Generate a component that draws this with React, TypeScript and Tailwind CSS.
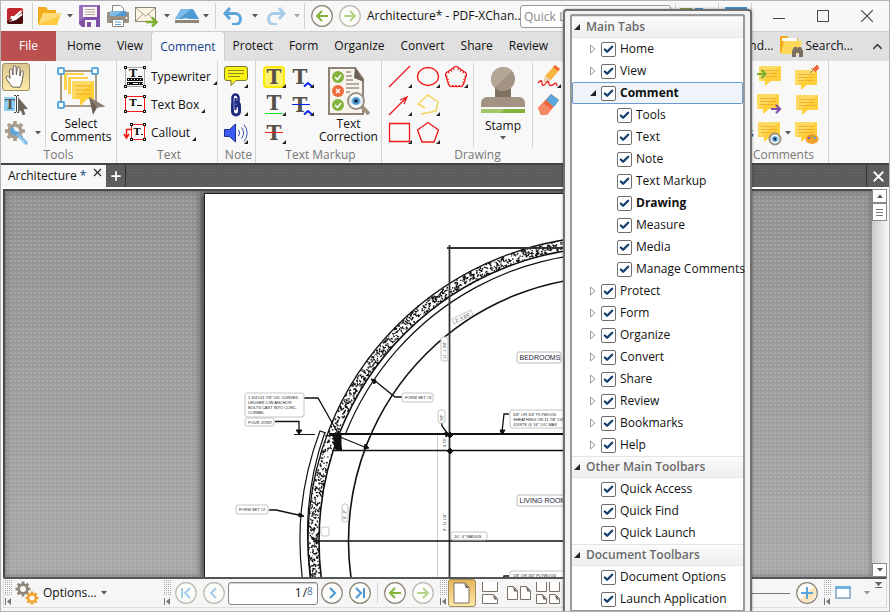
import { useState } from 'react';
import type { ReactNode } from 'react';
import { Check, ChevronUp, Plus, X } from 'lucide-react';

type Row = { label: string; level: number; kind?: 'closed' | 'open'; bold?: boolean; selected?: boolean };

const menuRows: Row[] = [
  { label: 'Main Tabs', level: 0 },
  { label: 'Home', level: 1, kind: 'closed' },
  { label: 'View', level: 1, kind: 'closed' },
  { label: 'Comment', level: 1, kind: 'open', bold: true, selected: true },
  { label: 'Tools', level: 2 },
  { label: 'Text', level: 2 },
  { label: 'Note', level: 2 },
  { label: 'Text Markup', level: 2 },
  { label: 'Drawing', level: 2, bold: true },
  { label: 'Measure', level: 2 },
  { label: 'Media', level: 2 },
  { label: 'Manage Comments', level: 2 },
  { label: 'Protect', level: 1, kind: 'closed' },
  { label: 'Form', level: 1, kind: 'closed' },
  { label: 'Organize', level: 1, kind: 'closed' },
  { label: 'Convert', level: 1, kind: 'closed' },
  { label: 'Share', level: 1, kind: 'closed' },
  { label: 'Review', level: 1, kind: 'closed' },
  { label: 'Bookmarks', level: 1, kind: 'closed' },
  { label: 'Help', level: 1, kind: 'closed' },
  { label: 'Other Main Toolbars', level: 0 },
  { label: 'Quick Access', level: 1 },
  { label: 'Quick Find', level: 1 },
  { label: 'Quick Launch', level: 1 },
  { label: 'Document Toolbars', level: 0 },
  { label: 'Document Options', level: 1 },
  { label: 'Launch Application', level: 1 },
];

const tabs = ['Home', 'View', 'Comment', 'Protect', 'Form', 'Organize', 'Convert', 'Share', 'Review'];

/* ---------- small parts ---------- */

function Caret({ className = '' }: { className?: string }) {
  return (
    <svg width="6" height="4" viewBox="0 0 6 4" className={`shrink-0 ${className}`}>
      <path d="M0 0h6L3 3.5z" fill="#555" />
    </svg>
  );
}

function Sep({ className = '' }: { className?: string }) {
  return <div className={`w-px shrink-0 self-stretch bg-[#d2d2d2] ${className}`} />;
}

function Pic({ w = 24, h = 24, children, className = '' }: { w?: number; h?: number; children: ReactNode; className?: string }) {
  return (
    <svg width={w} height={h} viewBox={`0 0 ${w} ${h}`} className={`shrink-0 ${className}`}>
      {children}
    </svg>
  );
}

// 28px ribbon cell, optional black corner marks a tool with options
function Tool({ label, corner = true, children }: { label: string; corner?: boolean; children: ReactNode }) {
  return (
    <button aria-label={label} className="block size-7 shrink-0">
      <svg width="28" height="28" viewBox="0 0 28 28" fill="none">
        {children}
        {corner && <path d="M26 21v4h-4z" fill="#222" />}
      </svg>
    </button>
  );
}

function Round({ label, stroke, children }: { label: string; stroke: string; children: ReactNode }) {
  return (
    <button aria-label={label} className="shrink-0">
      <svg width="22" height="22" viewBox="0 0 22 22" fill="none" strokeWidth="2">
        <circle cx="11" cy="11" r="10.3" fill="#fcfcfa" stroke={stroke} strokeWidth="1.2" />
        {children}
      </svg>
    </button>
  );
}

function Group({ label, className = '', children }: { label: string; className?: string; children: ReactNode }) {
  return (
    <section className={`flex shrink-0 flex-col border-r border-[#d2d2d2] pt-[2px] ${className}`}>
      <div className="flex h-[84px]">{children}</div>
      <h2 className="text-center leading-4 text-[#777]">{label}</h2>
    </section>
  );
}

function Grip() {
  return (
    <svg width="8" height="26" viewBox="0 0 8 26" className="shrink-0">
      {[0, 2, 4, 6, 8, 10, 12, 14].map((y) =>
        [0, 2, 4, 6].map((x) => <rect key={`${x}-${y}`} x={x} y={y} width="1" height="1" fill="#aaa" />)
      )}
      <path d="M0 18h1v7H0zM6 18v7l-4-3.500z" fill="#777" />
    </svg>
  );
}

/* ---------- icons ---------- */

function Bubble({ x = 0, y = 0 }: { x?: number; y?: number }) {
  return (
    <g transform={`translate(${x} ${y})`}>
      <path d="M0 0h22v15H12l-6 5v-5H0z" fill="#ffd03c" />
      <path d="M0 0h22L2 15H0z" fill="#ffda62" />
      <path d="M3 4.500h16M3 7.500h16M3 10.500h16" stroke="#f3b02c" strokeWidth="1" />
    </g>
  );
}

function Gear({ cx, cy, r, color }: { cx: number; cy: number; r: number; color: string }) {
  return (
    <g>
      {[0, 45, 90, 135].map((a) => (
        <rect key={a} x={cx - r * 0.18} y={cy - r} width={r * 0.36} height={r * 2} fill={color} transform={`rotate(${a} ${cx} ${cy})`} />
      ))}
      <circle cx={cx} cy={cy} r={r * 0.58} fill="#f7f7f7" stroke={color} strokeWidth={r * 0.36} />
    </g>
  );
}

function Letter({ x = 14, y = 21, size = 20, fill = '#57514b' }: { x?: number; y?: number; size?: number; fill?: string }) {
  return (
    <text x={x} y={y} fontSize={size} textAnchor="middle" fontFamily="DejaVu Serif, serif" fontWeight="700" fill={fill}>
      T
    </text>
  );
}

function Eye({ cx, cy, r }: { cx: number; cy: number; r: number }) {
  return (
    <g>
      <circle cx={cx} cy={cy} r={r} fill="#fff" stroke="#9a9083" strokeWidth="2" />
      <ellipse cx={cx} cy={cy} rx={r - 1.5} ry={r * 0.55} fill="#cfe4f4" />
      <circle cx={cx} cy={cy} r={r * 0.48} fill="#4a97d2" />
      <circle cx={cx} cy={cy} r={r * 0.22} fill="#10213a" />
    </g>
  );
}

const ArrowL = ({ c }: { c: string }) => <path d="M17 11H6M11 6l-5 5 5 5" stroke={c} />;
const ArrowR = ({ c }: { c: string }) => <path d="M5 11h11M11 6l5 5-5 5" stroke={c} />;

// scalloped pentagon, four bumps on every side
const corners = [[14, 4], [24, 11], [20.5, 22], [7.5, 22], [4, 11]];
const cloudPath =
  'M14 4' +
  corners
    .map(([x, y], i) => {
      const [nx, ny] = corners[(i + 1) % corners.length];
      return [1, 2, 3, 4]
        .map((k) => `A1.6 1.6 0 0 1 ${(x + ((nx - x) * k) / 4).toFixed(1)} ${(y + ((ny - y) * k) / 4).toFixed(1)}`)
        .join('');
    })
    .join('');

/* ---------- title bar ---------- */

function TitleBar() {
  return (
    <header className="flex h-[30px] shrink-0 items-center bg-[#f7f7f7]">
      <Pic w={16} h={16} className="ml-1.5">
        <rect width="16" height="16" rx="2" fill="#c3272b" />
        <path d="M16 4v10a2 2 0 0 1-2 2H2a2 2 0 0 1-2-2v-1z" fill="#4a0a0d" />
        <path d="M2 14l2-6 3 0 7-6 1 2-6 5 6-4 .5 2-6.500 5z" fill="#fff" />
        <path d="M2 14l3-2-1-2z" fill="#4a0a0d" />
      </Pic>
      <Sep className="my-0.5 ml-[9px]" />
      <button aria-label="Open" className="ml-1 flex items-center gap-1.5">
        <Pic>
          <path d="M1 3h8l2 3h8v14H1z" fill="#f2ac1b" />
          <path d="M6 9h18l-4 12H1z" fill="#ffcb3f" />
          <path d="M6 9h18l-1 3L2 20z" fill="#ffdb78" />
        </Pic>
        <Caret />
      </button>
      <button aria-label="Save" className="ml-1.5">
        <Pic w={22} h={22}>
          <path d="M1 0h20v22H3l-3-3V1z" fill="#7f50a4" />
          <path d="M1 0h20L0 17V1z" fill="#9a72ba" />
          <path d="M4 2h14v10H4zM6 15h11v7H6z" fill="#f7f4fa" />
          <path d="M6 4.500h10M6 7h10M6 9.500h10" stroke="#b9a98f" />
          <path d="M8 17h4v5H8z" fill="#7f50a4" />
        </Pic>
      </button>
      <button aria-label="Print" className="ml-1.5">
        <Pic w={22} h={22}>
          <path d="M5.500 8V.5h8l3 3V8" fill="#fff" stroke="#8e8477" />
          <rect y="7" width="22" height="11" rx="1" fill="#9a9083" />
          <path d="M3 6h16v5H3z" fill="#4f9ad2" />
          <path d="M3 6h13l-8 5H3z" fill="#7dbbe6" />
          <path d="M5.500 14.500h11v7h-11z" fill="#fff" stroke="#8e8477" />
          <path d="M8 17h6M8 19.500h6" stroke="#5aa5dc" />
          <circle cx="19.500" cy="13" r="1" fill="#fff" />
        </Pic>
      </button>
      <button aria-label="Send by e-mail" className="ml-1.5 flex items-center gap-1.5">
        <Pic w={23} h={22}>
          <rect x=".5" y="2.500" width="20" height="14" fill="#fdf5e3" stroke="#8e8477" />
          <path d="M1 3l9.500 8L20 3M1 16l7-7M20 16l-7-7" stroke="#a99c8b" fill="none" />
          <path d="M11 17h10M17 12.500l4.500 4.500-4.500 4.500" stroke="#7aae2d" strokeWidth="2.500" fill="none" />
        </Pic>
        <Caret />
      </button>
      <button aria-label="Scan" className="ml-[5px] flex items-center gap-1">
        <Pic w={24} h={20}>
          <path d="M6 3h12l6 10H0z" fill="#4f9ad2" />
          <path d="M6 3h10L4 13H0z" fill="#7dbbe6" />
          <path d="M0 14h24v3H0z" fill="#8e8477" />
          <path d="M8 13h5" stroke="#fff" />
        </Pic>
        <Caret />
      </button>
      <Sep className="my-0.5 ml-1.5" />
      <button aria-label="Undo" className="ml-[7px] flex items-center gap-2">
        <Pic w={21} h={18}>
          <path d="M7 1L2 6.500 7 12M2 6.500h10a5.500 5.500 0 0 1 0 11H9" stroke="#5aa5dc" strokeWidth="3" fill="none" />
        </Pic>
        <Caret />
      </button>
      <button aria-label="Redo" className="ml-[7px] flex items-center gap-2 opacity-50">
        <Pic w={21} h={18}>
          <path d="M14 1l5 5.500L14 12M19 6.500H9a5.500 5.500 0 0 0 0 11h3" stroke="#5aa5dc" strokeWidth="3" fill="none" />
        </Pic>
        <Caret />
      </button>
      <Sep className="my-0.5 ml-1" />
      <div className="ml-1.5 flex gap-1.5">
        <Round label="Previous view" stroke="#8e8477"><ArrowL c="#84b43c" /></Round>
        <Round label="Next view" stroke="#bdb7ad"><ArrowR c="#b5d38a" /></Round>
      </div>
      <h1 className="ml-1.5 w-[153px] shrink-0 whitespace-nowrap">Architecture* - PDF-XChan..</h1>
      <input
        aria-label="Quick Launch"
        placeholder="Quick Launch"
        className="h-[23px] w-[151px] shrink-0 rounded-[3px] border border-[#999] bg-white px-[3px] placeholder:text-[#8a8a8a]"
      />
      <Sep className="my-0.5 ml-1" />
      <Pic w={24} h={20} className="ml-1">
        <path d="M0 2h12v18H0z" fill="#84a43c" />
        <path d="M15 2h8v18h-8z" fill="#4a97d2" />
      </Pic>
      <Sep className="my-0.5 ml-3.5" />
      <Pic w={22} h={20} className="ml-1.5">
        <path d="M0 1h22v18H0z" fill="#4a97d2" />
        <path d="M1 5h20v13H1z" fill="#fff" />
      </Pic>
      <Sep className="my-0.5 ml-1" />
      <div className="ml-auto flex h-full">
        <button aria-label="Minimize" className="grid w-11 place-items-center"><Pic w={12} h={12}><path d="M0 8.500h12" stroke="#444" /></Pic></button>
        <button aria-label="Maximize" className="grid w-11 place-items-center"><Pic w={12} h={12}><path d="M.5.5h11v11H.5z" stroke="#444" fill="none" /></Pic></button>
        <button aria-label="Close" className="grid w-11 place-items-center"><Pic w={12} h={12}><path d="M0 0l12 12M12 0L0 12" stroke="#444" strokeWidth="1.200" /></Pic></button>
      </div>
    </header>
  );
}

function TabBar() {
  return (
    <nav className="flex h-[30px] shrink-0 bg-[#e0e0e0] shadow-[inset_0_1px_0_#cfcfcf]">
      <button className="w-[55px] shrink-0 bg-[#bb5050] text-white">File</button>
      <div className="ml-[3px] flex">
        {tabs.map((t) => (
          <button
            key={t}
            className={
              t === 'Comment'
                ? 'rounded-t-sm border border-b-0 border-[#cfcfcf] bg-[#f8f8f8] px-2 text-[#12448c]'
                : 'px-2'
            }
          >
            {t}
          </button>
        ))}
      </div>
      <div className="ml-auto flex items-center">
        <button>Find...</button>
        <button className="ml-1.5 flex items-center gap-[3px]">
          <Pic w={23} h={22}>
            <path d="M0 1h7l2 2h9v15H0z" fill="#f2ac1b" />
            <path d="M2 3h15v3H2z" fill="#fff" />
            <path d="M4 6h18l-3 13H1z" fill="#ffd95c" />
            <path d="M12 22v-6l2-4h3l1 1 1-1h2l2 4v6h-4v-4h-3v4z" fill="#7b7062" />
          </Pic>
          Search...
        </button>
        <button aria-label="Collapse ribbon" className="mr-1 ml-[17px]"><ChevronUp size={15} strokeWidth={2.5} color="#444" /></button>
      </div>
    </nav>
  );
}

/* ---------- ribbon ---------- */

function Ribbon() {
  return (
    <div className="flex h-[102px] shrink-0 bg-[#f8f8f8]">
      <Group label="Tools" className="w-[116px]">
        <div className="w-11 pl-px">
          <button aria-label="Hand" className="grid size-7 place-items-center rounded-[3px] border border-[#a08c5c] bg-linear-to-b from-[#dcc692] to-[#fdeaa8]">
            <svg width="22" height="24" viewBox="0 0 22 24">
              <path
                d="M7 22C5 18 2 16 1 12c1-1.500 3-1 4 1.500L4.500 5c.5-1.800 2.500-1.500 2.700 0L8 10l.2-8c.3-1.700 2.600-1.700 2.800 0l.4 8 1-7c.4-1.600 2.500-1.300 2.600.2L14.800 11l1.400-4.500c.6-1.400 2.400-.8 2.200.8-.6 4-1 11-3.400 15z"
                fill="#fff"
                stroke="#6b6257"
              />
            </svg>
          </button>
          <Tool label="Select text" corner={false}>
            <path d="M2 6h11v14H2z" fill="#8dd0f5" />
            <Letter x={8} y={18} size={13} />
            <path d="M12 4.500h2M15 4.500h2M14.500 5v16M12 21.500h2M15 21.500h2" stroke="#444" />
            <path d="M16 6l10 12-4.500.2 2 5-2.800 1-2-5L16 22z" fill="#6d655c" />
          </Tool>
          <button aria-label="Tool settings" className="flex h-7 items-center gap-[5px]">
            <svg width="28" height="28" viewBox="0 0 28 28" fill="none">
              <Gear cx={13} cy={12} r={10} color="#a99d8e" />
              <path d="M14 14l10 10" stroke="#7dbbe6" strokeWidth="3.500" strokeLinecap="round" />
              <path d="M11 7.500a4.500 4.500 0 1 0 6 5.500l-3-.5-2-2z" fill="#5aa5dc" />
              <path d="M17 18l6 6" stroke="#c4e1f5" strokeWidth="1" />
            </svg>
            <Caret />
          </button>
        </div>
        <Sep />
        <button className="flex grow flex-col items-center gap-0.5 pt-1 leading-[13px]">
          <Pic w={48} h={48}>
            <rect x="4" y="4" width="35" height="35" stroke="#a99a86" strokeWidth="2" fill="none" />
            <path d="M7 6h20v2H10v15H7z" fill="#ffd24a" />
            <path d="M11 10h20v2H14v15h-3z" fill="#ffd24a" />
            <path d="M15 14h22v18h-7l-7 7v-7h-8z" fill="#ffce36" />
            <path d="M15 14h22L17 32h-2z" fill="#ffda62" />
            <path d="M19 19h14M19 23h14M19 27h14" stroke="#f0a51e" />
            {[[4, 4], [38, 4], [4, 38]].map(([x, y]) => (
              <rect key={`${x}-${y}`} x={x - 3} y={y - 3} width="6" height="6" rx="1" fill="#fff" stroke="#5aa5dc" strokeWidth="2" />
            ))}
            <path d="M32 30l16 9.500-8 1-4 7.500z" fill="#6d6156" />
            <path d="M32 30l16 9.500-8 1z" fill="#8b7f71" />
          </Pic>
          <span>Select<br />Comments</span>
        </button>
      </Group>

      <Group label="Text" className="w-[101px] pl-1">
        <div>
          {['Typewriter', 'Text Box', 'Callout'].map((t, i) => (
            <button key={t} className="flex h-7 items-center gap-0.5">
              <svg width="28" height="28" viewBox="0 0 28 28" fill="none">
                {i === 0 && (
                  <>
                    <path d="M4.500 4.500h19v19h-19z" stroke="#555" strokeDasharray="1 1" />
                    <path d="M6 16.500h16M6 20.500h16" stroke="#111" strokeWidth="3" />
                    <path d="M7 16.500h15M7 20.500h3M18 20.500h4" stroke="#fff" strokeDasharray="1 2" />
                    <path d="M12 20.500h5" stroke="#fff" />
                    <Letter x={12} y={14} size={11} fill="#111" />
                    <path d="M17 13.500h4" stroke="#111" />
                  </>
                )}
                {i === 1 && (
                  <>
                    <path d="M4.500 5.500h19v15h-19z" fill="#fff" stroke="#f01818" />
                    <Letter x={12} y={15} size={10} fill="#111" />
                    <path d="M16 14.500h5" stroke="#111" />
                  </>
                )}
                {i === 2 && (
                  <>
                    <path d="M10.500 5.500h13v15h-13z" fill="#fff" stroke="#f01818" />
                    <Letter x={16} y={16} size={10} fill="#111" />
                    <path d="M20 15.500h2" stroke="#111" />
                    <path d="M10 10.500H5.500V18M3 15l2.500 4L8 15" stroke="#f01818" strokeWidth="1.500" />
                  </>
                )}
                {[i === 2 ? 10.5 : 4.5, 23.5].map((x) =>
                  [i === 0 ? 4.5 : 5.5, i === 0 ? 23.5 : 20.5].map((y) => (
                    <rect key={`${x}-${y}`} x={x - 1} y={y - 1} width="2" height="2" fill="#fff" stroke="#111" />
                  ))
                )}
              </svg>
              <span>{t}</span>
              <svg width="4" height="4" viewBox="0 0 4 4" className="mt-3"><path d="M4 0v4H0z" fill="#222" /></svg>
            </button>
          ))}
        </div>
      </Group>

      <Group label="Note" className="w-[38px] pl-1">
        <div>
          <Tool label="Sticky note">
            <path d="M5 3.500h18a2.500 2.500 0 0 1 2.500 2.500v9a2.500 2.500 0 0 1-2.500 2.500H14l-5 5v-5H5A2.500 2.500 0 0 1 2.500 15V6A2.500 2.500 0 0 1 5 3.500z" fill="#fbf413" stroke="#77762a" />
            <path d="M6 7.500h16M6 10.500h16M6 13.500h12" stroke="#8a892a" />
          </Tool>
          <Tool label="Attach file">
            <rect x="10.500" y="3.500" width="6" height="12" rx="3" stroke="#1d2a80" strokeWidth="2.500" />
            <rect x="10.500" y="11" width="7" height="13" rx="3.500" stroke="#1d2a80" strokeWidth="3" />
            <path d="M13.500 7v12" stroke="#1d2a80" strokeWidth="2" />
            <path d="M12 9v9" stroke="#7f8dd0" strokeWidth="1" />
          </Tool>
          <Tool label="Sound">
            <path d="M2.500 10.500h5l6-5.500v18l-6-5.500h-5z" fill="#3d5cf5" stroke="#1c2f92" />
            <path d="M16.500 11a5 5 0 0 1 0 6M19.500 8.500a9 9 0 0 1 0 11M22 5.500a13 13 0 0 1 0 17" stroke="#3a4fa8" />
          </Tool>
        </div>
      </Group>

      <Group label="Text Markup" className="w-[126px] pl-1">
        <div className="grid grid-cols-2">
          <Tool label="Highlight">
            <rect x="4" y="4" width="20" height="20" rx="3" fill="#fff36b" stroke="#f8ea00" strokeWidth="2" />
            <Letter />
          </Tool>
          <Tool label="Squiggly">
            <Letter x={12} />
            <path d="M16 23.500l4-3.500 4 3.500" stroke="#0b23f0" strokeWidth="2" />
          </Tool>
          <Tool label="Underline">
            <Letter y={19} />
            <path d="M5 22.500h18" stroke="#1be02a" />
          </Tool>
          <Tool label="Replace text">
            <Letter x={12} />
            <path d="M4 13.500h18" stroke="#0b23f0" />
            <path d="M16 23.500l4-3.500 4 3.500" stroke="#0b23f0" strokeWidth="2" />
          </Tool>
          <Tool label="Strikeout">
            <Letter />
            <path d="M5 13.500h18" stroke="#f01818" />
          </Tool>
        </div>
        <button className="flex grow flex-col items-center gap-0.5 pt-1 leading-[13px]">
          <Pic w={42} h={48}>
            <path d="M1 1h26l8 11v35H1z" fill="#f7f4ee" stroke="#8e8477" strokeWidth="2" />
            <path d="M27 0l9 15-10-4z" fill="#6d6156" />
            <path d="M18 5h5M18 9h6M18 13h7M18 17h13M18 21h13M18 25h4" stroke="#a39382" strokeWidth="1.500" />
            <circle cx="10" cy="10" r="6" fill="#84b43c" />
            <circle cx="10" cy="24" r="6" fill="#f0693c" />
            <circle cx="10" cy="38" r="6" fill="#84b43c" />
            <path d="M7 10l2.500 2.500L13 8M7 38l2.500 2.500L13 36M8 22l4 4M12 22l-4 4" stroke="#fff" strokeWidth="1.500" fill="none" />
            <path d="M33 39l8 8" stroke="#a39382" strokeWidth="4" />
            <Eye cx={28} cy={34} r={8} />
          </Pic>
          <span>Text<br />Correction</span>
        </button>
      </Group>

      <Group label="Drawing" className="w-[188px] pl-1">
        <div className="grid h-[84px] grid-cols-3">
          <Tool label="Line"><path d="M3 24L24 3" stroke="#f01818" strokeWidth="1.300" /></Tool>
          <Tool label="Oval"><ellipse cx="14" cy="13.500" rx="10.500" ry="9" stroke="#f01818" strokeWidth="1.300" /></Tool>
          <Tool label="Cloud"><path d={cloudPath} stroke="#f01818" strokeWidth="1.300" /></Tool>
          <Tool label="Arrow"><path d="M3 24L20 7M14 9l7-3-3 7" stroke="#f01818" strokeWidth="1.300" /></Tool>
          <Tool label="Polyline"><path d="M11 17L4 13 14 4l10 7-2 9-15 3" stroke="#f2d660" strokeWidth="1.500" /></Tool>
          <div />
          <Tool label="Rectangle"><path d="M3.500 4.500h20v18h-20z" stroke="#f01818" strokeWidth="1.300" /></Tool>
          <Tool label="Polygon"><path d="M14 3.500L24.500 11 20 23H8L3.500 11z" stroke="#f01818" strokeWidth="1.300" /></Tool>
        </div>
        <Sep className="ml-[3px]" />
        <button className="flex w-[58px] flex-col items-center pt-1 leading-[13px]">
          <Pic w={44} h={48}>
            <path d="M14 20h16v12H14z" fill="#7f7263" />
            <path d="M6 30h32a6 6 0 0 1 6 6v4H0v-4a6 6 0 0 1 6-6z" fill="#a39382" />
            <circle cx="22" cy="12" r="12" fill="#a39382" />
            <path d="M31 4A12 12 0 1 0 13.500 20.500z" fill="#b4a695" />
            <path d="M0 42h44v4H0z" fill="#84b43c" />
            <path d="M0 42h24l-4 4H0z" fill="#a0c866" />
          </Pic>
          <span className="mt-1">Stamp</span>
          <Caret className="mt-1" />
        </button>
        <Sep />
        <div className="ml-0.5">
          <Tool label="Pencil">
            <path d="M10 13L20 2l5 4-9 11-7 2z" fill="#f6b73c" />
            <path d="M20 2l5 4-2 2-5-4z" fill="#f0693c" />
            <path d="M10 13l6 4-7 2z" fill="#e8d3b4" />
            <path d="M3 20c3-3 4-3 4 0s2 3 4 0 3-1 3 1 3 2 5 0 3 0 3 2" stroke="#f01818" strokeWidth="1.300" />
          </Tool>
          <Tool label="Eraser" corner={false}>
            <path d="M3 17L16 3l8 6-12 15H6z" fill="#f0693c" />
            <path d="M16 3l8 6-5 7-8-7z" fill="#5aa5dc" />
            <path d="M3 17l5-5 8 6-4 6H7z" fill="#f58a66" />
          </Tool>
        </div>
      </Group>

      <Sep className="ml-[120px]" />
      <Group label="Manage Comments" className="w-[138px]">
        <button className="mt-auto mb-2 w-16 shrink-0 text-center leading-[13px]">Manage<br />Comments</button>
        <div className="grid grow grid-cols-2">
          <Tool label="Import comments" corner={false}>
            <Bubble x={4} y={3} />
            <path d="M2 11h8M6.500 7l4 4-4 4" stroke="#7aae2d" strokeWidth="2.200" />
          </Tool>
          <Tool label="Pin comment" corner={false}>
            <Bubble x={3} y={7} />
            <path d="M18 10l5-5" stroke="#8e8477" />
            <path d="M19 5l5 4M21 6l4-4 2 3-3 3z" stroke="#f0693c" fill="#f0693c" />
          </Tool>
          <Tool label="Export comments" corner={false}>
            <Bubble x={2} y={3} />
            <path d="M16 18h8M21 14l4 4-4 4" stroke="#7f50a4" strokeWidth="2.200" />
          </Tool>
          <Tool label="Comment list" corner={false}><Bubble x={4} y={4} /></Tool>
          <button aria-label="Show comments" className="flex h-7 items-center gap-0.5">
            <svg width="28" height="28" viewBox="0 0 28 28" fill="none" className="shrink-0">
              <Bubble x={3} y={3} />
              <Eye cx={20} cy={20} r={5.5} />
            </svg>
            <Caret />
          </button>
          <Tool label="Comment styles" corner={false}>
            <Bubble x={3} y={3} />
            <ellipse cx="20" cy="20" rx="6.500" ry="5" fill="#f2a02c" />
            <circle cx="17" cy="19" r="1.200" fill="#7f50a4" />
            <circle cx="20" cy="17.500" r="1.200" fill="#84b43c" />
            <circle cx="23" cy="19" r="1.200" fill="#5aa5dc" />
          </Tool>
        </div>
      </Group>
    </div>
  );
}

/* ---------- document ---------- */

const CX = 613;
const CY = 541;

// concrete fill of the round wall, short strokes scattered between both faces
function wallSpeckle() {
  let seed = 7;
  const rnd = () => {
    seed = (seed * 16807) % 2147483647;
    return seed / 2147483647;
  };
  let d = '';
  for (let i = 0; i < 1250; i++) {
    const a = (168 + rnd() * 107) * (Math.PI / 180);
    const r = 294.5 + rnd() * 10;
    const x = CX + Math.cos(a) * r;
    const y = CY + Math.sin(a) * r;
    d += `M${x.toFixed(1)} ${y.toFixed(1)}l${(rnd() * 4 - 2).toFixed(1)} ${(rnd() * 4 - 2).toFixed(1)}`;
  }
  return d;
}
const speckle = wallSpeckle();

function Note({ x, y, w, h, lines }: { x: number; y: number; w: number; h: number; lines: string[] }) {
  return (
    <g>
      <rect x={x} y={y} width={w} height={h} rx="2" fill="#fff" stroke="#c4c4c4" />
      {lines.map((t, i) => (
        <text key={t} x={x + 3} y={y + 6 + i * 5} fontSize="4" fill="#222">{t}</text>
      ))}
    </g>
  );
}

function Drawing() {
  return (
    <svg width="468" height="384" viewBox="205 194 468 384" fill="none" stroke="#111" fontFamily="Liberation Sans, Arial, sans-serif" className="block">
      <path d={speckle} strokeWidth="1.300" />
      <circle cx={CX} cy={CY} r="305" strokeWidth="1.300" />
      <circle cx={CX} cy={CY} r="294" strokeWidth="1.600" />
      <circle cx={CX} cy={CY} r="264.500" strokeWidth="1.600" />
      <path d="M345 435A288 288 0 0 1 673 259" strokeWidth="1.200" />
      <path d="M313 590A304 304 0 0 1 325 432M304 590A311 311 0 0 1 320 431l6 2" strokeWidth="1.200" />
      <path d="M447 248h226M449.500 245v333" strokeWidth="1.800" stroke="#333" />
      <path d="M437.500 434v144" stroke="#ccc" />
      <path d="M330 434h343" strokeWidth="1.800" />
      <path d="M332 450.500h341M313 541h360" strokeWidth="1.400" />
      <path d="M294 434.500h21" />
      <path d="M325 436l13-2 4 17-6-2-3-13M335 435h6v14h-6z" fill="#111" />
      <path d="M340 437l27 11M304 398h14l21 37M275 421.500h24v11M269 510h7l27 6M374 380l21 17h7M373 380l3 3M441 418l1 8 6 8M509 414h-5l-2 18M509 576h-5l-1 4" strokeWidth="1.300" />
      <path d="M296 430h6l-3 4zM299 513l5 3-5 1zM371 379l5 1-2 4zM365 444l4 4-5 1zM500 430h5l-3 5zM445 432l5 2-4 3zM447 435l3-3 3 3-3 3zM447 451l3-3 3 3-3 3z" fill="#111" />
      <g stroke="none">
        <Note x={245} y={393} w={59} h={24} lines={['1 3/4"x11 7/8" LVL CURVED', 'LEDGER C/W ANCHOR', 'BOLTS CAST INTO CONC.', 'CORBEL']} />
        <Note x={245} y={418} w={29} h={8} lines={['POUR JOINT']} />
        <Note x={402} y={393} w={31} h={9} lines={['FORM SET #3']} />
        <Note x={236} y={505} w={32} h={9} lines={['FORM SET #2']} />
        <Note x={451} y={532} w={36} h={8} lines={['10\'- 0" RADIUS']} />
        <Note x={510} y={410} w={80} h={18} lines={['5/8" OR 3/4" PLYWOOD', 'SHEATHING ON 11 7/8" LVL', 'JOISTS @ 16" O/C MAX']} />
        <Note x={510} y={571} w={80} h={10} lines={['5/8" OR 3/4" PLYWOOD']} />
        <rect x="441" y="337" width="7" height="24" rx="2" fill="#fff" stroke="#c4c4c4" />
        <rect x="438" y="410" width="7" height="13" rx="2" fill="#fff" stroke="#c4c4c4" />
        <rect x="342" y="504" width="6" height="18" rx="2" fill="#fff" stroke="#c4c4c4" />
        <rect x="321" y="527" width="8" height="9" rx="2" fill="#fff" stroke="#c4c4c4" />
        <path d="M452 319l19-9 2 5-19 9z" fill="#fff" stroke="#c4c4c4" />
        <g fontSize="4" fill="#222">
          <text transform="rotate(-90 446 359)" x="446" y="359">11'- 1 3/4"</text>
          <text transform="rotate(-90 443 421)" x="443" y="421">3/8"</text>
          <text transform="rotate(-90 446 447)" x="446" y="447">4.79"</text>
          <text transform="rotate(-90 446 531)" x="446" y="531">9'- 11 1/4"</text>
          <text transform="rotate(-90 346 519)" x="346" y="519">9'- 2"</text>
          <text transform="rotate(-26 456 322)" x="456" y="322">2'- 6 3/4"</text>
        </g>
        <rect x="517" y="352" width="44" height="11" rx="2" fill="#fff" stroke="#bbb" />
        <rect x="517" y="495" width="56" height="11" rx="2" fill="#fff" stroke="#bbb" />
        <text x="519.500" y="360" fontSize="7" fill="#223">BEDROOMS</text>
        <text x="519.500" y="503" fontSize="7" fill="#223">LIVING ROOM</text>
      </g>
    </svg>
  );
}

function Workspace() {
  return (
    <>
      <div className="flex h-6 shrink-0 border-t-2 border-[#444] bg-[#5c5c5c] bg-[radial-gradient(#ffffff14_1px,transparent_1px)] bg-[length:3px_3px]">
        <div className="flex w-[105px] items-start gap-[5px] bg-[#f8f8f8] pl-[7px]">
          <span className="w-[78px] leading-[22px] whitespace-nowrap">Architecture <span className="text-[#12448c]">*</span></span>
          <button aria-label="Close tab" className="mt-px"><X size={13} strokeWidth={2} color="#222" /></button>
        </div>
        <button aria-label="New tab" className="grid w-5 place-items-center border-r border-[#333]"><Plus size={14} strokeWidth={3} color="#fff" /></button>
        <button aria-label="Close document" className="ml-auto grid w-[23px] place-items-center border-l border-[#333]"><X size={17} strokeWidth={2.5} color="#fff" /></button>
      </div>
      <div className="flex min-h-0 grow border-t-2 border-white px-0.5">
        <main className="min-w-0 grow overflow-hidden border-2 border-r-0 border-b-0 border-[#4a4a4a] bg-[#a3a3a3] bg-[radial-gradient(#ffffff26_1px,transparent_1px),linear-gradient(to_bottom,#929292,#a8a8a8)] bg-[length:4px_4px,auto] pt-0.5 shadow-[inset_0_0_6px_#4448]">
          <div className="mx-auto h-full w-[470px] overflow-hidden border border-b-0 border-[#222] bg-white shadow-[-2px_0_7px_#333]">
            <Drawing />
          </div>
        </main>
        <div className="flex w-[15px] shrink-0 flex-col bg-linear-to-r from-[#c9c9c9] to-[#f4f4f4]">
          <button aria-label="Scroll up" className="grid h-[14px] place-items-center border border-[#888] bg-white"><Caret className="rotate-180" /></button>
          <div className="grid h-[18px] place-items-center border border-[#888] bg-white"><Pic w={7} h={7}><path d="M0 .5h7M0 3.500h7M0 6.500h7" stroke="#777" /></Pic></div>
          <button aria-label="Scroll down" className="mt-auto grid h-[14px] place-items-center border border-[#888] bg-white"><Caret /></button>
        </div>
      </div>
    </>
  );
}

/* ---------- bottom bar ---------- */

function BottomBar() {
  const [page, setPage] = useState('1');
  const leaf = (x: number, y: number, w: number, h: number) => (
    <g>
      <path d={`M${x} ${y}h${w - 4}l4 4v${h - 4}h${-w}z`} fill="#fff" stroke="#7b7062" />
      <path d={`M${x + w - 5} ${y}l5 5h-3z`} fill="#5d5349" />
    </g>
  );
  return (
    <footer className="mx-0.5 mb-[3px] flex h-[31px] shrink-0 items-center border border-t-2 border-[#ddd] border-t-[#555] bg-[#f6f6f6] pl-px">
      <Grip />
      <button className="ml-0.5 flex items-center gap-1">
        <Pic w={24} h={24}>
          <Gear cx={8} cy={8} r={7.5} color="#8e8477" />
          <Gear cx={17} cy={17} r={6.5} color="#f2a02c" />
        </Pic>
        <span>Options...</span>
        <Caret />
      </button>
      <div className="ml-[57px] flex items-center gap-[3px]">
        <Grip />
        <div className="flex items-center gap-1.5">
          <Round label="First page" stroke="#bdb7ad"><path d="M7 6v10M15 6l-5 5 5 5" stroke="#a3cdec" /></Round>
          <Round label="Previous page" stroke="#bdb7ad"><path d="M13 6l-5 5 5 5" stroke="#a3cdec" /></Round>
        </div>
        <label className="flex h-[23px] w-[90px] items-center rounded-[3px] border border-[#888] bg-white pr-1 shadow-[inset_0_1px_1px_#0003]">
          <input aria-label="Page" value={page} onChange={(e) => setPage(e.target.value)} className="w-0 grow text-right outline-none" />
          <span className="ml-px">/</span>
          <span className="mb-1 text-[10px] text-[#4a6f9c]">8</span>
        </label>
        <div className="flex items-center gap-1.5">
          <Round label="Next page" stroke="#8e8477"><path d="M9 6l5 5-5 5" stroke="#4a97d2" /></Round>
          <Round label="Last page" stroke="#8e8477"><path d="M7 6l5 5-5 5M15 6v10" stroke="#4a97d2" /></Round>
          <Sep className="my-px" />
          <Round label="Back" stroke="#8e8477"><ArrowL c="#84b43c" /></Round>
          <Round label="Forward" stroke="#bdb7ad"><ArrowR c="#b5d38a" /></Round>
        </div>
      </div>
      <div className="ml-1.5 flex items-center">
        <Grip />
        <button aria-label="Single page" className="grid size-7 place-items-center rounded-[3px] border border-[#a08c5c] bg-linear-to-b from-[#e3b55a] to-[#fdeaa8]">
          <Pic w={17} h={22}>{leaf(1, 1, 15, 20)}</Pic>
        </button>
        <button aria-label="Continuous" className="ml-1.5">
          <Pic w={17} h={22}><path d="M.5 0v9.500h15V0" fill="#fff" stroke="#7b7062" />{leaf(0.5, 12.5, 15, 9)}</Pic>
        </button>
        <button aria-label="Two pages" className="ml-2"><Pic w={25} h={16}>{leaf(0.5, 1.5, 10, 13)}{leaf(13.5, 1.5, 10, 13)}</Pic></button>
        <button aria-label="Two pages continuous" className="ml-1">
          <Pic w={25} h={22}><path d="M.5 0v9.500h10V0M13.500 0v9.500h10V0" fill="#fff" stroke="#7b7062" />{leaf(0.5, 12.5, 10, 9)}{leaf(13.5, 12.5, 10, 9)}</Pic>
        </button>
      </div>
      <div className="ml-auto flex items-center">
        <div className="h-px w-24 bg-[#777]" />
        <span className="ml-1.5 flex">
          <Round label="Zoom in" stroke="#8e8477">
            <path d="M18 4A10 10 0 0 1 4 18z" fill="#fde3b8" />
            <path d="M11 5v12M5 11h12" stroke="#5aa5dc" />
          </Round>
        </span>
        <span className="ml-1.5 flex"><Grip /></span>
        <Pic w={17} h={14} className="ml-[3px]">
          <path d="M1 1h14v11H1z" fill="#fff" stroke="#9db7cf" strokeWidth="2" />
          <path d="M0 0h16v3H0z" fill="#6fb2e0" />
        </Pic>
        <Caret className="ml-3 opacity-60" />
        <Pic w={7} h={24} className="mr-1 ml-[5px]">
          <path d="M0 1.500h7M0 6.500h7" stroke="#666" />
          <path d="M1 2h5L3.500 5.500z" fill="#666" />
        </Pic>
      </div>
    </footer>
  );
}

/* ---------- toolbars menu ---------- */

function MenuRow({ row }: { row: Row }) {
  const [on, setOn] = useState(true);

  if (row.level === 0) {
    return (
      <div className="flex h-[22px] items-center gap-1.5 border-y border-[#e4e4e4] bg-linear-to-b from-[#fbfbfb] to-[#efefef] pl-0.5 font-semibold text-[#6a6a6a]">
        <Pic w={6} h={6}><path d="M6 0v6H0z" fill="#222" /></Pic>
        {row.label}
      </div>
    );
  }
  return (
    <label
      className={
        'flex h-[22px] items-center gap-1 ' +
        (row.level === 2 ? 'pl-[45px] ' : 'pl-[17px] ') +
        (row.selected ? 'rounded-xs bg-[#eef4fa] ring-1 ring-[#6a9bd0] ring-inset ' : '') +
        (row.bold ? 'font-bold' : '')
      }
    >
      {row.level === 1 && (
        <Pic w={8} h={10}>
          {row.kind === 'closed' && <path d="M1.500 1v8L6 5z" fill="#fff" stroke="#999" />}
          {row.kind === 'open' && <path d="M7 2v6H1z" fill="#222" />}
        </Pic>
      )}
      <span className="grid size-[15px] shrink-0 place-items-center [&>*]:[grid-area:1/1]">
        <input
          type="checkbox"
          checked={on}
          onChange={(e) => setOn(e.target.checked)}
          className="size-[15px] appearance-none rounded-[2px] border border-[#6e6e6e] bg-white"
        />
        {on && <Check size={11} strokeWidth={5} color="#123f6b" className="pointer-events-none" />}
      </span>
      <span className="whitespace-nowrap">{row.label}</span>
    </label>
  );
}

function ToolbarsMenu() {
  return (
    <div className="absolute top-2 left-[562px] w-[189px] rounded-t-[4px] border-2 border-[#6f6f6f] bg-[#f3f3f3] px-[5px] pt-[3px] shadow-[0_0_3px_#0006]">
      <div className="rounded-t-xs border-2 border-[#999] bg-white">
        {menuRows.map((row) => (
          <MenuRow key={row.label} row={row} />
        ))}
      </div>
    </div>
  );
}

export default function App() {
  return (
    <div className="relative flex h-screen flex-col overflow-hidden border border-[#b4b4b4] bg-[#f6f6f6] font-['Open_Sans','Noto_Sans',sans-serif] text-[12px] text-[#111]">
      <TitleBar />
      <TabBar />
      <Ribbon />
      <Workspace />
      <BottomBar />
      <ToolbarsMenu />
    </div>
  );
}
